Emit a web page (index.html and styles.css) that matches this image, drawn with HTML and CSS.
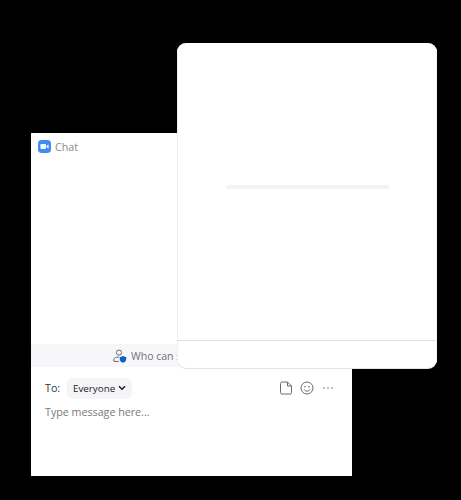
FILE: index.html
```html
<!DOCTYPE html>
<html lang="en">
<head>
<meta charset="utf-8">
<title>Chat</title>
<link rel="stylesheet" href="styles.css">
</head>
<body>
<section class="chat">
  <header class="chat-head">
    <svg class="logo" viewBox="0 0 14 14" width="13" height="13" aria-hidden="true">
      <rect width="14" height="14" rx="4" fill="#3f8cf3"/>
      <rect x="2.6" y="4.4" width="6" height="5.2" rx="1.3" fill="#fff"/>
      <path d="M9.3 6.3 11.4 4.8v4.4L9.3 7.7z" fill="#fff"/>
    </svg>
    <span class="chat-title">Chat</span>
  </header>
  <div class="chat-body"></div>
  <div class="who">
    <svg class="who-icon" viewBox="0 0 14 14" width="14" height="14" aria-hidden="true">
      <circle cx="6" cy="3.6" r="2.6" fill="none" stroke="#66667a" stroke-width="1"/>
      <path d="M.8 12.200v-1.400c0-1.600 1.400-2.600 3-2.600h2.400" fill="none" stroke="#66667a" stroke-width="1"/>
      <path d="M.8 12.400h5" fill="none" stroke="#66667a" stroke-width="1"/>
      <path d="M10 7l3.200 1.200v2.200c0 1.600-1.400 2.700-3.200 3.300-1.800-.6-3.200-1.700-3.200-3.300V8.200z" fill="#0e5fc9"/>
    </svg>
    <span class="who-text">Who can see your messages?</span>
  </div>
  <div class="compose">
    <div class="compose-bar">
      <span class="to">To:</span>
      <button class="recipient" type="button">Everyone
        <svg viewBox="0 0 8 6" width="8" height="6" aria-hidden="true"><path d="M1 1.200 4 4.200 7 1.200" fill="none" stroke="#1f1f1f" stroke-width="1.500"/></svg>
      </button>
      <div class="tools">
        <svg viewBox="0 0 14 14" width="14" height="14" aria-hidden="true"><path d="M3 1h5.500L12.500 5v6.500a1.500 1.500 0 0 1-1.500 1.500H3a1.500 1.500 0 0 1-1.500-1.500v-9A1.500 1.500 0 0 1 3 1zM8.500 1v4h4" fill="none" stroke="#6a6a74" stroke-width="1"/></svg>
        <svg viewBox="0 0 14 14" width="14" height="14" aria-hidden="true"><circle cx="7" cy="7" r="6" fill="none" stroke="#6a6a74" stroke-width="1"/><circle cx="5" cy="5.700" r=".8" fill="#6a6a74"/><circle cx="9" cy="5.700" r=".8" fill="#6a6a74"/><path d="M4 8.300c.7 1.200 1.700 1.800 3 1.800s2.300-.6 3-1.800" fill="none" stroke="#6a6a74" stroke-width="1"/></svg>
        <svg viewBox="0 0 14 14" width="14" height="14" aria-hidden="true"><circle cx="3" cy="7" r=".8" fill="#6a6a74"/><circle cx="7" cy="7" r=".8" fill="#6a6a74"/><circle cx="11" cy="7" r=".8" fill="#6a6a74"/></svg>
      </div>
    </div>
    <p class="placeholder">Type message here...</p>
  </div>
</section>
<section class="dialog">
  <div class="dialog-body"><div class="progress"></div></div>
  <div class="dialog-foot"></div>
</section>
</body>
</html>
```
FILE: styles.css
```css
html, body {
  margin: 0;
  padding: 0;
  height: 100%;
  background: #000;
  overflow: hidden;
  font-family: "Open Sans", "Liberation Sans", sans-serif;
}

.chat {
  position: absolute;
  left: 31px;
  top: 133px;
  width: 321px;
  height: 343px;
  background: #fff;
  display: flex;
  flex-direction: column;
}

.chat-head {
  display: flex;
  align-items: center;
  gap: 4px;
  height: 27px;
  padding-left: 7px;
}

.logo { flex: none; }

.chat-title {
  font-size: 10.7px;
  color: #8a8a8a;
}

.chat-body { flex: 1; }

.who {
  height: 23px;
  background: #f7f7fa;
  display: flex;
  align-items: center;
  padding-left: 82px;
  gap: 4px;
  white-space: nowrap;
  overflow: hidden;
}

.who-icon { flex: none; }

.who-text {
  font-size: 10.5px;
  color: #707078;
}

.compose {
  height: 109px;
  padding: 10px 14px 0;
  box-sizing: border-box;
}

.compose-bar {
  display: flex;
  align-items: center;
  height: 22px;
}

.to {
  font-size: 10.7px;
  color: #333;
  width: 22px;
}

.recipient {
  display: inline-flex;
  align-items: center;
  gap: 3px;
  height: 21px;
  padding: 0 6px;
  border: 0;
  border-radius: 6px;
  background: #f5f5f8;
  font: inherit;
  font-size: 9.8px;
  color: #222;
}

.tools {
  margin-left: auto;
  display: flex;
  gap: 7px;
  margin-right: 3px;
}

.placeholder {
  margin: 6px 0 0;
  font-size: 10.7px;
  color: #78787e;
}

.dialog {
  position: absolute;
  left: 177px;
  top: 43px;
  width: 260px;
  height: 325px;
  background: #fff;
  border-radius: 9px;
  box-shadow: inset 1px 0 0 #f0f0f3, inset -1px 0 0 #f6f6f8, 0 1px 0 #e4e4e8;
  display: flex;
  flex-direction: column;
}

.dialog-body {
  flex: 1;
  display: flex;
  justify-content: center;
  padding-top: 142px;
}

.progress {
  width: 163px;
  height: 4px;
  background: #f3f3f5;
  border-radius: 2px;
}

.dialog-foot {
  height: 27px;
  border-top: 1px solid #dedee2;
}
```
